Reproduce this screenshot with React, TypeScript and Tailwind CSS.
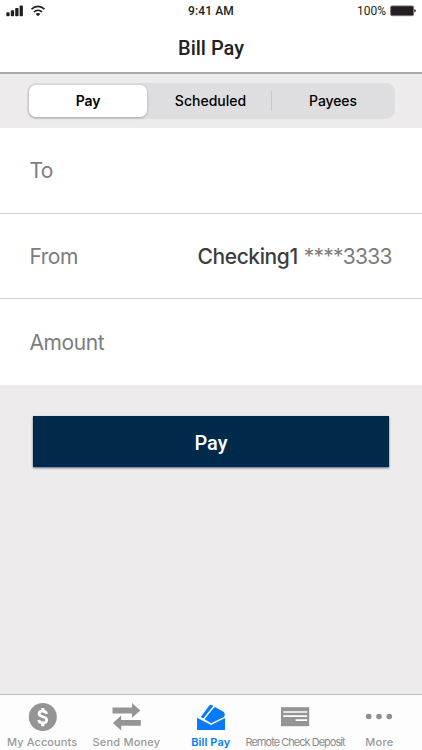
import type { ReactNode } from "react";

function StatusBar() {
  return (
    <div className="grid h-[22px] grid-cols-3 items-center pl-[6px] pr-[6px] font-['Roboto',sans-serif] text-[12px] text-[#231f20]">
      <div className="flex items-center gap-[8px]">
        <svg width="18" height="12" viewBox="0 0 18 12" fill="#231f20">
          <rect x="0.3" y="7.2" width="3.3" height="4" rx="0.8" />
          <rect x="4.8" y="5.3" width="3.3" height="5.9" rx="0.8" />
          <rect x="9.2" y="3" width="3.3" height="8.2" rx="0.8" />
          <rect x="13.6" y="0.6" width="3.3" height="10.6" rx="0.8" />
        </svg>
        <svg className="-ml-[1px]" width="14" height="12" viewBox="0 0 13 12" preserveAspectRatio="none" fill="none" stroke="#231f20" strokeWidth="1.6">
          <path d="M0.4 4.2C3.8 0.4 9.2 0.4 12.6 4.2" />
          <path d="M2.7 7C4.9 4.6 8.1 4.6 10.3 7" />
          <path d="M6.5 11.2L4.3 8.9C5.6 7.7 7.4 7.7 8.7 8.9Z" fill="#231f20" stroke="none" />
        </svg>
      </div>
      <span className="text-center font-medium tracking-[0.1px]">9:41 AM</span>
      <div className="flex items-center justify-end gap-[4px]">
        <span>100%</span>
        <svg width="26" height="12" viewBox="0 0 26 12">
          <rect x="0.6" y="0.9" width="23" height="9.8" rx="1.4" fill="#231f20" stroke="#77777a" strokeWidth="0.9" />
          <path d="M24.4 4.1C26.3 4.5 26.3 7.1 24.4 7.5Z" fill="#231f20" />
        </svg>
      </div>
    </div>
  );
}

function Row({ label, labelClass, children, last }: { label: string; labelClass: string; children?: ReactNode; last?: boolean }) {
  return (
    <div
      className={`flex items-center justify-between bg-white pl-[29.5px] pr-[31px] text-[21px] leading-[30px] text-[#7c7c7c] ${
        last ? "h-[86px] pt-[1px]" : "h-[85.5px] border-b border-[#d2d2d2] pt-[2px]"
      }`}
    >
      <span className={labelClass}>{label}</span>
      {children}
    </div>
  );
}

function Tab({ icon, label, labelClass }: { icon: ReactNode; label: string; labelClass: string }) {
  return (
    <button className="flex h-full w-[84.3px] flex-col items-center">
      <span className="flex h-[39px] items-center justify-center pt-[4px]">{icon}</span>
      <span className={`whitespace-nowrap text-[11px] leading-[16px] ${labelClass}`}>{label}</span>
    </button>
  );
}

function CoinIcon() {
  return (
    <svg width="29" height="28" viewBox="0 0 29 28" fill="none">
      <circle cx="14.8" cy="14" r="14" fill="#959595" />
      <path d="M18.6 10.9C18.3 9 16.8 8.2 14.7 8.2C12.4 8.2 11 9.2 11 10.8C11 12.7 12.7 13.2 14.8 13.7C17 14.2 18.7 15 18.7 17C18.7 18.9 17.1 19.9 14.8 19.9C12.4 19.9 10.9 18.9 10.7 17" stroke="white" strokeWidth="2.7" />
      <path d="M14.8 5V8.6M14.8 19.6V23.2" stroke="white" strokeWidth="3.2" />
    </svg>
  );
}

function TransferIcon() {
  return (
    <svg width="29" height="28" viewBox="0 0 29 28" fill="#959595">
      <path d="M0.5 4.6H20V0L28.4 7.4L20 14.8V10.4H0.5Z" />
      <path d="M28.8 16.9H9.2V12.5L0.9 19.9L9.2 27.4V22.8H28.8Z" />
    </svg>
  );
}

function EnvelopeIcon() {
  return (
    <svg width="28" height="28" viewBox="0 0 28 28" fill="#087bfb">
      <path d="M0 14.7L14.1 21.9L28 15.1V27H0Z" />
      <path d="M3.8 14L11.9 2.9C12.9 1.5 14.3 1.3 15.5 2.3L16.2 3L6.3 15.6Z" />
      <path d="M7.5 16.3L16.2 5.4C17.1 4.3 18.3 4.1 19.4 4.7L26 8.6C27.7 9.6 28.1 11 27.5 12.6L27 14L14.1 20.2Z" />
    </svg>
  );
}

function CheckIcon() {
  return (
    <svg width="29" height="28" viewBox="0 0 29 28">
      <rect x="0" y="4.2" width="28.2" height="19" fill="#959595" />
      <path d="M2.2 9H26.2M2.2 13.1H26.2M14.6 17.2H26.2" stroke="white" strokeWidth="1.7" />
    </svg>
  );
}

function MoreIcon() {
  return (
    <svg width="28" height="28" viewBox="0 0 28 28" fill="#8e8e8e">
      <circle cx="3.7" cy="13.5" r="2.8" />
      <circle cx="14" cy="13.5" r="2.8" />
      <circle cx="24.3" cy="13.5" r="2.8" />
    </svg>
  );
}

export default function App() {
  return (
    <main className="flex h-[750px] w-[422px] flex-col overflow-hidden bg-[#edebec] font-['Inter',sans-serif]">
      <header className="h-[74px] shrink-0 border-b-2 border-[#a9a9aa] bg-white">
        <StatusBar />
        <h1 className="text-center font-['Roboto',sans-serif] text-[20px] font-medium leading-[52px] text-[#242122]">
          Bill Pay
        </h1>
      </header>

      <nav className="flex h-[54px] shrink-0 items-center justify-center">
        <div className="flex h-[36px] w-[368px] items-center rounded-[9px] bg-[#dedddf] p-[2px] text-[14px] font-medium text-black">
          <button className="h-[32px] w-[118px] rounded-[7px] bg-white pb-[2px] text-[14px] font-semibold tracking-[-0.1px] shadow-[0_1px_3px_rgba(0,0,0,0.25)]">
            Pay
          </button>
          <button className="h-[32px] flex-1 pb-[2px] pl-[3px]">Scheduled</button>
          <span className="h-[20px] w-px bg-[#c8c7ca]" />
          <button className="h-[32px] w-[121px] pb-[2px] pl-[1px] tracking-[-0.1px]">Payees</button>
        </div>
      </nav>

      <section className="shrink-0">
        <Row label="To" labelClass="tracking-[-0.6px]" />
        <Row label="From" labelClass="tracking-[-0.5px]">
          <span className="flex gap-[6px] tracking-[-0.75px]">
            <strong className="font-medium tracking-[-0.4px] text-[#3d3d3d]">Checking1</strong>
            <span className="-mr-[0.75px]">****3333</span>
          </span>
        </Row>
        <Row label="Amount" labelClass="tracking-[-0.4px]" last />
      </section>

      <section className="flex-1 px-[33px] pt-[31px]">
        <button className="h-[51px] w-full bg-[#002a4c] pt-[2px] font-['Roboto',sans-serif] text-[20px] font-medium text-white shadow-[0_1px_2px_rgba(0,30,60,0.65)]">
          Pay
        </button>
      </section>

      <nav className="flex h-[56px] shrink-0 border-t border-[#bdbcbd] bg-[#fdfdfd]">
        <Tab icon={<CoinIcon />} label="My Accounts" labelClass="font-medium text-[#999] tracking-[0.1px]" />
        <Tab icon={<TransferIcon />} label="Send Money" labelClass="font-medium text-[#999] tracking-[0.2px]" />
        <Tab icon={<EnvelopeIcon />} label="Bill Pay" labelClass="font-semibold text-[#087bfb] tracking-[0.1px]" />
        <Tab icon={<CheckIcon />} label="Remote Check Deposit" labelClass="text-[#8c8c8c] tracking-[-0.98px]" />
        <Tab icon={<MoreIcon />} label="More" labelClass="font-medium text-[#999] tracking-[0.3px]" />
      </nav>
    </main>
  );
}
